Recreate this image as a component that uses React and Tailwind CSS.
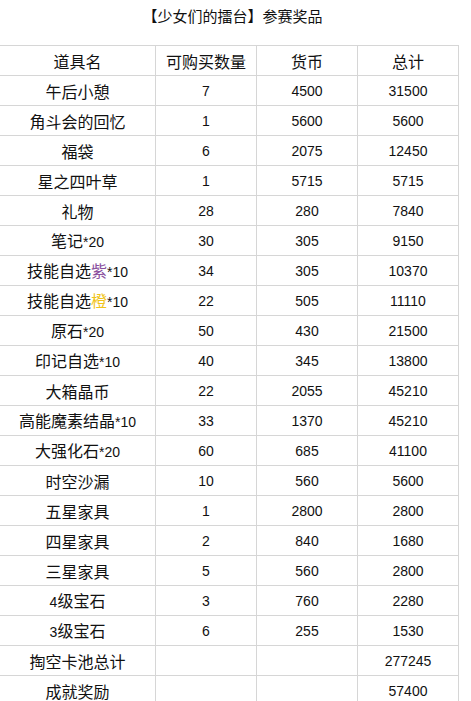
import React from "react";

const rows = [
  ["午后小憩", "7", "4500", "31500"],
  ["角斗会的回忆", "1", "5600", "5600"],
  ["福袋", "6", "2075", "12450"],
  ["星之四叶草", "1", "5715", "5715"],
  ["礼物", "28", "280", "7840"],
  [["笔记", "*20"], "30", "305", "9150"],
  [["技能自选", "*10", "紫", "text-[#8a4f9e]"], "34", "305", "10370"],
  [["技能自选", "*10", "橙", "text-[#f0c419]"], "22", "505", "11110"],
  [["原石", "*20"], "50", "430", "21500"],
  [["印记自选", "*10"], "40", "345", "13800"],
  ["大箱晶币", "22", "2055", "45210"],
  [["高能魔素结晶", "*10"], "33", "1370", "45210"],
  [["大强化石", "*20"], "60", "685", "41100"],
  ["时空沙漏", "10", "560", "5600"],
  ["五星家具", "1", "2800", "2800"],
  ["四星家具", "2", "840", "1680"],
  ["三星家具", "5", "560", "2800"],
  [["", "级宝石", "4"], "3", "760", "2280"],
  [["", "级宝石", "3"], "6", "255", "1530"],
  ["掏空卡池总计", "", "", "277245"],
  ["成就奖励", "", "", "57400"],
];

const cjk = "font-['Noto_Sans_CJK_SC',sans-serif] text-[16px]";
const num = "font-['Liberation_Sans',sans-serif] text-[14px]";

function Name({ v }) {
  if (typeof v === "string") return <span className={cjk}>{v}</span>;
  const [a, b, c, cls] = v;
  if (a === "") {
    return (
      <span>
        <span className={num}>{c}</span>
        <span className={cjk}>{b}</span>
      </span>
    );
  }
  return (
    <span>
      <span className={cjk}>{a}</span>
      {c ? <span className={`${cjk} ${cls}`}>{c}</span> : null}
      <span className={num}>{b}</span>
    </span>
  );
}

export default function App() {
  const cell = "h-[30px] flex items-center justify-center border-b border-r border-[#d6d6d6] text-[#111] leading-none";
  return (
    <div className="w-[471px] h-[701px] bg-white overflow-hidden">
      <div className="w-[459px] h-[45px] flex items-center justify-center pb-[12px] pl-[6px]">
        <span className="font-['Noto_Sans_CJK_SC',sans-serif] text-[15px] text-[#111]">【少女们的擂台】参赛奖品</span>
      </div>
      <div className="grid grid-cols-[156px_101px_101px_101px] w-[459px] border-t border-[#d6d6d6]">
        {["道具名", "可购买数量", "货币", "总计"].map((h) => (
          <div key={h} className={`${cell} ${cjk}`}>{h}</div>
        ))}
        {rows.map((r, ri) => (
          <React.Fragment key={ri}>
            <div className={cell}><Name v={r[0]} /></div>
            <div className={`${cell} ${num}`}>{r[1]}</div>
            <div className={`${cell} ${num}`}>{r[2]}</div>
            <div className={`${cell} ${num}`}>{r[3]}</div>
          </React.Fragment>
        ))}
      </div>
    </div>
  );
}
